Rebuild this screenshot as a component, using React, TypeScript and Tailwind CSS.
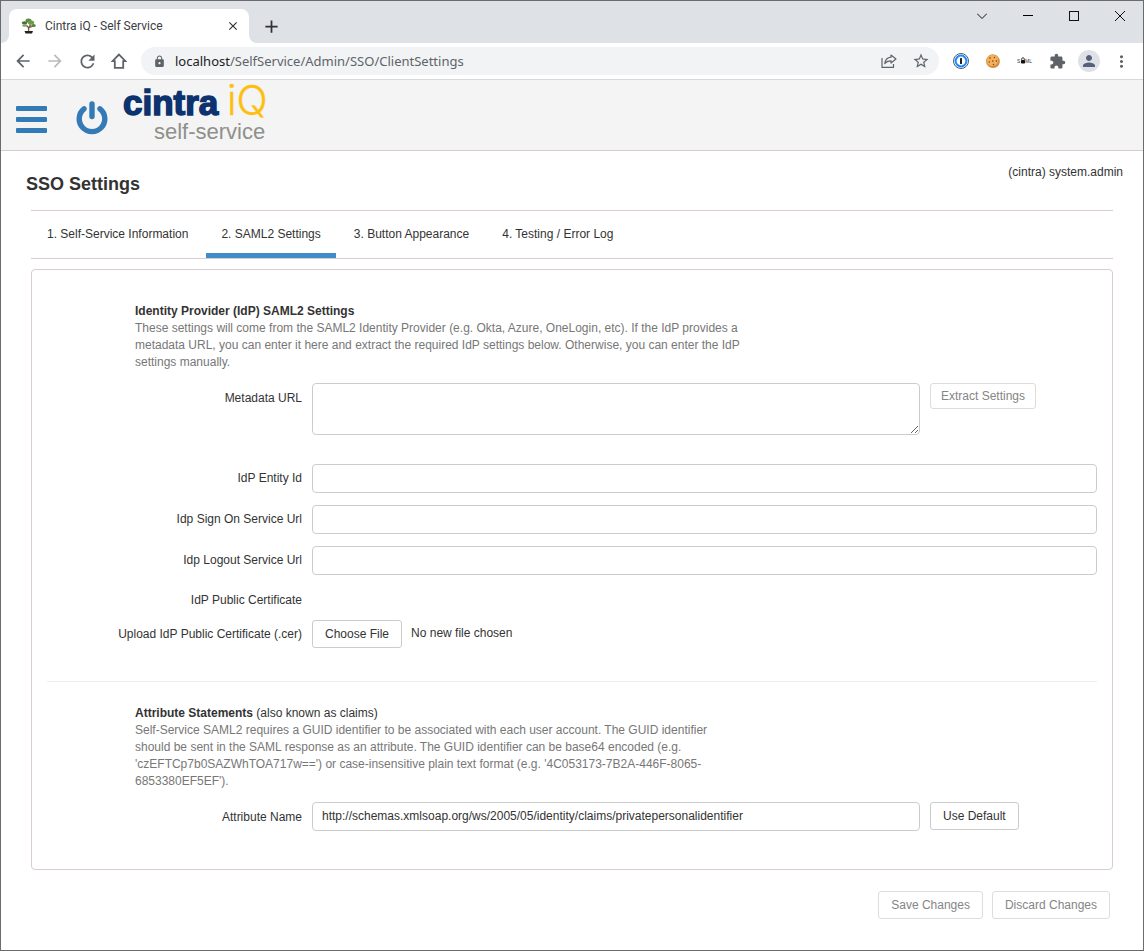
import React, { useRef, useState } from 'react';
import {
  MdAdd,
  MdArrowBack,
  MdArrowForward,
  MdClose,
  MdExtension,
  MdLock,
  MdMoreVert,
  MdPerson,
  MdRefresh,
  MdStarBorder,
} from 'react-icons/md';

const BonsaiIcon = () => (
  <svg className="w-4 h-4 shrink-0" viewBox="0 0 16 16">
    <path d="M7.500 13c1-2 .2-3-.7-4.500L5 7.500M7.500 10c1.500-1 2-2 1.500-4M8 9.500l3.500-1" fill="none" stroke="#6b5238" strokeWidth="1.300" />
    <ellipse cx="7.500" cy="2.500" rx="3" ry="2" fill="#5f8a45" />
    <ellipse cx="3.500" cy="4.800" rx="2.800" ry="1.600" fill="#4a7034" />
    <ellipse cx="10" cy="4.500" rx="3.200" ry="2" fill="#6f9a52" />
    <ellipse cx="3.800" cy="7.500" rx="2.600" ry="1.200" fill="#7ba35d" />
    <ellipse cx="12.500" cy="7.600" rx="2.300" ry="1.500" fill="#57803e" />
    <path d="M3.500 13h8.500l-1 2.500H4.500z" fill="#2a2020" />
  </svg>
);

const HomeIcon = () => (
  <svg className="w-4 h-4" viewBox="0 0 16 16" fill="none" stroke="#5f6368" strokeWidth="1.800">
    <path d="M8 1.500L1.500 8.200h2.300v6.600h8.400V8.200h2.300z" />
  </svg>
);

const ShareIcon = () => (
  <svg className="w-4 h-4" viewBox="0 0 16 16" fill="none" stroke="#5f6368" strokeWidth="1.200" strokeLinejoin="round">
    <path d="M1 5v9.400h11.500V11" />
    <path d="M10 2l5 4-5 4V7.800c-3 0-4.800.7-6.200 2.900C4.200 7.300 6.300 4.600 10 4.200z" />
  </svg>
);

const OnePasswordIcon = () => (
  <svg className="w-4 h-4" viewBox="0 0 16 16">
    <circle cx="8" cy="8" r="7.500" fill="#fff" stroke="#4f5a66" />
    <circle cx="8" cy="8" r="5.400" fill="#fff" stroke="#1a8cff" strokeWidth="2" />
    <rect x="7" y="5" width="2" height="6" rx="0.500" fill="#222" />
  </svg>
);

const CookieIcon = () => (
  <svg className="w-4 h-4" viewBox="0 0 16 16">
    <path d="M8 1.200c1.500 0 2 .8 3.200 1 1.200.3 1.500 1.600 2.400 2.500.9.800 1.200 2 1.200 3.600 0 4-3 6.700-6.800 6.700S1.100 12.200 1.100 8.300 4.200 1.200 8 1.200z" fill="#d98a35" />
    <path d="M7.500 2c3.300 0 5.700 2.200 5.700 5.300S10.800 13 7.400 13 1.800 10.800 1.800 7.500 4.200 2 7.500 2z" fill="#f0b05c" />
    <g fill="#7a3f16">
      <circle cx="5" cy="5" r="0.800" />
      <circle cx="9.500" cy="4.500" r="0.700" />
      <circle cx="7.800" cy="8" r="0.800" />
      <circle cx="4.300" cy="9" r="0.700" />
      <circle cx="11.500" cy="8" r="0.800" />
      <circle cx="8.500" cy="11.500" r="0.700" />
    </g>
  </svg>
);

const SamlIcon = () => (
  <svg className="w-4 h-4" viewBox="0 0 16 16">
    <g fill="#333" fontFamily="'Liberation Sans', sans-serif" fontSize="5">
      <text x="0" y="10">S</text>
      <text x="8" y="10">ML</text>
    </g>
    <path d="M4.700 7V6a1.300 1.300 0 0 1 2.600 0v1" fill="none" stroke="#111" strokeWidth="0.800" />
    <rect x="4" y="7" width="4" height="3.500" rx="0.800" fill="#111" />
  </svg>
);

const PowerIcon = () => (
  <svg className="w-8 h-[34px]" viewBox="0 0 32 34" fill="none" stroke="#337ab7" strokeLinecap="round">
    <path d="M8 7.800A12.800 12.800 0 1 0 24 7.800" strokeWidth="5.400" />
    <path d="M16 3v12.500" strokeWidth="5.400" />
  </svg>
);

const Logo = () => (
  <svg className="w-[150px] h-[70px]" viewBox="0 0 150 70" role="img" aria-label="cintra iQ self-service">
    <text x="2" y="35" fill="#0c326f" stroke="#0c326f" strokeWidth="1.500" fontSize="35" fontWeight="700" fontFamily="'Liberation Sans', sans-serif">cintra</text>
    <text x="106" y="35" fill="#fdbf0f" stroke="#fdbf0f" strokeWidth="0.300" fontSize="41" fontWeight="300" fontFamily="Inter, sans-serif">iQ</text>
    <text x="33" y="59" fill="#8f8f8c" fontSize="22" fontFamily="'Liberation Sans', sans-serif">self-service</text>
  </svg>
);

const iconButton = 'w-8 h-8 shrink-0 flex items-center justify-center text-[#5f6368]';
const windowButton = 'w-[46px] h-[29px] flex items-center justify-center';

const BrowserChrome = () => (
  <div>
    <div className="flex items-start justify-between bg-[#dee1e6]">
      <div className="flex items-end pl-2">
        <div className="relative mt-2 w-60 h-[34px] bg-white rounded-t-lg flex items-center pl-3 pr-2">
          <svg className="absolute -left-2 bottom-0 w-2 h-2" viewBox="0 0 8 8" fill="#fff"><path d="M8 0v8H0a8 8 0 0 0 8-8z" /></svg>
          <svg className="absolute -right-2 bottom-0 w-2 h-2" viewBox="0 0 8 8" fill="#fff"><path d="M0 0v8h8a8 8 0 0 1-8-8z" /></svg>
          <BonsaiIcon />
          <span className="ml-2 flex-1 font-[Roboto,sans-serif] text-xs text-[#3c4043] whitespace-nowrap">Cintra iQ - Self Service</span>
          <button type="button" aria-label="Close tab" className="w-4 h-4 flex items-center justify-center text-[#303236]">
            <MdClose size={14} />
          </button>
        </div>
        <button type="button" aria-label="New tab" className="w-8 h-[34px] ml-1.5 flex items-center justify-center text-[#303236]">
          <MdAdd size={21} />
        </button>
      </div>
      <div className="flex">
        <button type="button" aria-label="Search tabs" className={windowButton}>
          <svg width="10" height="6" viewBox="0 0 10 6" fill="none" stroke="#111"><path d="M0 .5l5 5 5-5" /></svg>
        </button>
        <button type="button" aria-label="Minimize" className={windowButton}>
          <svg width="10" height="1" viewBox="0 0 10 1"><rect width="10" height="1" /></svg>
        </button>
        <button type="button" aria-label="Maximize" className={windowButton}>
          <svg width="10" height="10" viewBox="0 0 10 10" fill="none" stroke="#111"><rect x=".5" y=".5" width="9" height="9" /></svg>
        </button>
        <button type="button" aria-label="Close" className={windowButton}>
          <svg width="10" height="10" viewBox="0 0 10 10" stroke="#111"><path d="M0 0l10 10M10 0L0 10" /></svg>
        </button>
      </div>
    </div>

    <div className="flex items-center h-[37px] px-1.5 bg-white border-b border-[#d6d8db]">
      <button type="button" aria-label="Back" className={iconButton}><MdArrowBack size={20} /></button>
      <button type="button" aria-label="Forward" className="w-8 h-8 shrink-0 flex items-center justify-center text-[#b9bbbe]"><MdArrowForward size={20} /></button>
      <button type="button" aria-label="Reload" className={iconButton}><MdRefresh size={21} /></button>
      <button type="button" aria-label="Home" className={iconButton}><HomeIcon /></button>
      <div className="flex-1 flex items-center h-7 mx-1.5 pl-3 pr-0.5 rounded-full bg-[#f1f3f4]">
        <MdLock size={13} className="text-[#5f6368]" />
        <span className="flex-1 ml-[9px] font-['Noto_Sans','Open_Sans',sans-serif] text-[13px] text-[#5f6368] whitespace-nowrap">
          <span className="text-[#202124]">localhost</span>/SelfService/Admin/SSO/ClientSettings
        </span>
        <button type="button" aria-label="Share" className={iconButton}><ShareIcon /></button>
        <button type="button" aria-label="Bookmark" className={iconButton}><MdStarBorder size={18} /></button>
      </div>
      <button type="button" aria-label="1Password" className={iconButton}><OnePasswordIcon /></button>
      <button type="button" aria-label="Cookies" className={iconButton}><CookieIcon /></button>
      <button type="button" aria-label="SAML tracer" className={iconButton}><SamlIcon /></button>
      <button type="button" aria-label="Extensions" className={iconButton}><MdExtension size={17} /></button>
      <button type="button" aria-label="Profile" className={iconButton}>
        <span className="w-[22px] h-[22px] rounded-full bg-[#dee1e6] flex items-center justify-center"><MdPerson size={18} className="text-[#56607a]" /></span>
      </button>
      <button type="button" aria-label="Menu" className={iconButton}><MdMoreVert size={19} /></button>
    </div>
  </div>
);

const tabs = ['1. Self-Service Information', '2. SAML2 Settings', '3. Button Appearance', '4. Testing / Error Log'];

const urlFields = [
  { id: 'entity-id', label: 'IdP Entity Id' },
  { id: 'sign-on-url', label: 'Idp Sign On Service Url' },
  { id: 'logout-url', label: 'Idp Logout Service Url' },
];

const labelClass = 'w-[255px] shrink-0 text-right';
const inputClass = 'flex-1 min-w-0 h-[29px] px-[9px] pb-0.5 bg-white border border-[#ccc] rounded';
const buttonClass = 'h-7 px-3 bg-white border border-[#ccc] rounded-[3px] whitespace-nowrap disabled:text-[#858585] disabled:border-[#ddd]';

const App = () => {
  const [activeTab, setActiveTab] = useState(1);
  const [attribute, setAttribute] = useState('http://schemas.xmlsoap.org/ws/2005/05/identity/claims/privatepersonalidentifier');
  const fileRef = useRef<HTMLInputElement>(null);

  return (
    <div className="min-h-screen flex flex-col bg-white border border-[#6b6b6b] font-['Liberation_Sans',Arial,sans-serif] text-xs leading-[17px] text-[#333]">
      <BrowserChrome />

      <header className="flex items-center h-[71px] pl-[15px] bg-[#f4f4f4] border-b border-[#d8cccc]">
        <button type="button" aria-label="Menu" className="mt-2 flex flex-col gap-1.5">
          <span className="w-[31px] h-[5px] rounded-[1px] bg-[#337ab7]" />
          <span className="w-[31px] h-[5px] rounded-[1px] bg-[#337ab7]" />
          <span className="w-[31px] h-[5px] rounded-[1px] bg-[#337ab7]" />
        </button>
        <button type="button" aria-label="Log out" className="mt-1.5 ml-[29px]"><PowerIcon /></button>
        <a href="#" className="ml-[13px]"><Logo /></a>
      </header>

      <main className="flex flex-col">
        <div className="flex items-start justify-between pl-[25px] pr-5">
          <h1 className="pt-[23px] text-lg leading-5 font-bold">SSO Settings</h1>
          <span className="pt-[13px]">(cintra) system.admin</span>
        </div>

        <nav className="flex gap-[3px] mx-[30px] mt-4 pl-px border-y border-[#d8cccc]">
          {tabs.map((tab, i) => (
            <button
              key={tab}
              type="button"
              onClick={() => setActiveTab(i)}
              className={`h-[47px] px-[15px] pt-[5px] border-b-[5px] whitespace-nowrap ${
                i === activeTab ? 'border-[#428bca]' : 'border-transparent'
              }`}
            >
              {tab}
            </button>
          ))}
        </nav>

        <section className="mx-[30px] mt-[10px] px-[15px] pt-[33px] pb-[38px] border border-[#d8cccc] rounded">
          <div className="ml-[88px] max-w-[608px]">
            <h2 className="font-bold">Identity Provider (IdP) SAML2 Settings</h2>
            <p className="text-[#777]">
              These settings will come from the SAML2 Identity Provider (e.g. Okta, Azure, OneLogin, etc). If the IdP provides a metadata URL, you can enter it here and extract the required IdP settings below. Otherwise, you can enter the IdP settings manually.
            </p>
          </div>

          <div className="flex items-start gap-[10px] mt-3 mb-[29px]">
            <label htmlFor="metadata-url" className="w-[255px] shrink-0 text-right pt-[7px]">Metadata URL</label>
            <textarea id="metadata-url" className="flex-1 min-w-0 h-[52px] px-[9px] py-1.5 bg-white border border-[#ccc] rounded" />
            <div className="w-[167px]">
              <button type="button" disabled className="h-[26px] px-[10px] bg-white border border-[#ddd] rounded-[3px] text-[#858585] whitespace-nowrap">
                Extract Settings
              </button>
            </div>
          </div>

          <div className="flex flex-col gap-3">
            {urlFields.map((field) => (
              <div key={field.id} className="flex items-center gap-[10px]">
                <label htmlFor={field.id} className={labelClass}>{field.label}</label>
                <input id={field.id} type="text" className={inputClass} />
              </div>
            ))}
            <div className="flex items-center h-[26px]">
              <span className={labelClass}>IdP Public Certificate</span>
            </div>
          </div>

          <div className="flex items-center mt-[7px]">
            <label htmlFor="certificate" className={labelClass}>Upload IdP Public Certificate (.cer)</label>
            <input ref={fileRef} id="certificate" type="file" accept=".cer" className="hidden" />
            <button type="button" onClick={() => fileRef.current?.click()} className={`ml-[10px] ${buttonClass}`}>Choose File</button>
            <span className="ml-[9px] pb-0.5">No new file chosen</span>
          </div>

          <hr className="mt-[33px] mb-[23px] border-[#eee]" />

          <div className="ml-[88px] max-w-[608px]">
            <h2><b className="font-bold">Attribute Statements</b> (also known as claims)</h2>
            <p className="text-[#777]">
              Self-Service SAML2 requires a GUID identifier to be associated with each user account. The GUID identifier should be sent in the SAML response as an attribute. The GUID identifier can be base64 encoded (e.g. 'czEFTCp7b0SAZWhTOA717w==') or case-insensitive plain text format (e.g. '4C053173-7B2A-446F-8065-6853380EF5EF').
            </p>
          </div>

          <div className="flex items-start gap-[10px] mt-3">
            <label htmlFor="attribute-name" className="w-[255px] shrink-0 text-right pt-[7px]">Attribute Name</label>
            <input id="attribute-name" type="text" value={attribute} onChange={(e) => setAttribute(e.target.value)} className={inputClass} />
            <div className="w-[167px]">
              <button type="button" className={buttonClass}>Use Default</button>
            </div>
          </div>
        </section>

        <div className="flex justify-end gap-[9px] mt-[21px] mr-[33px]">
          <button type="button" disabled className={buttonClass}>Save Changes</button>
          <button type="button" disabled className={buttonClass}>Discard Changes</button>
        </div>
      </main>
    </div>
  );
};

export default App;
